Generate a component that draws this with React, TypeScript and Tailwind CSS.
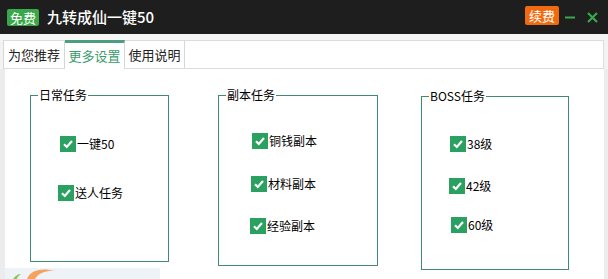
const cjk = { fontFamily: '"Microsoft YaHei", "Noto Sans CJK SC", sans-serif' };

function Check({ label, ml, mt }: { label: string; ml: string; mt: string }) {
    return (
        <div className={`flex items-center h-4 ${ml} ${mt}`}>
            <span className="w-4 h-4 bg-[#2aa160] flex items-center justify-center shrink-0">
                <svg width="12" height="12" viewBox="0 0 12 12">
                    <path d="M2 6.2 L4.8 9 L10 3" stroke="#fff" strokeWidth="2.2" fill="none" />
                </svg>
            </span>
            <span className="ml-px text-[12px] leading-4 text-black">{label}</span>
        </div>
    )
}

export default function App() {
    return (
        <div className="w-[608px] h-[279px] overflow-hidden bg-[#f3f3f3]" style={cjk}>
            {/* title bar */}
            <div className="h-[34px] bg-[#1e1e1e] flex items-center pl-[7px] pr-[10px]">
                <span className="bg-[#3aa74b] text-white text-[13px] leading-[17px] h-[17px] px-[3px] rounded-[2px]">免费</span>
                <span className="ml-[8px] text-white text-[15px] font-medium">九转成仙一键50</span>
                <span className="ml-auto bg-[#f06b10] text-white text-[13px] leading-[19px] h-[19px] px-[4px] rounded-[2px] -mt-[3px]">续费</span>
                <svg className="ml-[6px]" width="10" height="10" viewBox="0 0 10 10">
                    <path d="M0 5.5 H10" stroke="#3aa74b" strokeWidth="2" />
                </svg>
                <svg className="ml-[12px]" width="11" height="11" viewBox="0 0 11 11">
                    <path d="M1 1 L10 10 M10 1 L1 10" stroke="#3aa74b" strokeWidth="2.2" />
                </svg>
            </div>
            {/* tabs */}
            <div className="h-[6px] bg-[#f6f6f6]" />
            <div className="flex h-[29px] ml-[3px] mr-[4px] bg-white border-t border-b border-r border-[#dcdcdc]">
                <div className="w-[62px] border-l border-r border-[#d6d6d6] flex items-center justify-center text-[13px] text-[#222]">为您推荐</div>
                <div className="w-[60px] -mb-px bg-white border-r border-[#d6d6d6] border-t-[3px] border-t-[#4c9e7e] -mt-px flex items-center justify-center text-[13px] text-[#3a9c6b]">更多设置</div>
                <div className="w-[60px] border-r border-[#d6d6d6] flex items-center justify-center text-[13px] text-[#222]">使用说明</div>
            </div>
            {/* content */}
            <div className="relative flex h-[210px] bg-white border-l-[5px] border-r-[4px] border-[#ececec] pl-[25px] pt-[19px]">
                <fieldset className="w-[139px] h-[174px] border border-[#3f8c70] shrink-0">
                    <legend className="ml-[7px] px-px text-[12px] leading-[14px] text-black">日常任务</legend>
                    <Check label="一键50" ml="ml-[29px]" mt="mt-[34px]" />
                    <Check label="送人任务" ml="ml-[27px]" mt="mt-[33px]" />
                </fieldset>
                <fieldset className="ml-[49px] w-[160px] h-[178px] border border-[#3f8c70] shrink-0">
                    <legend className="ml-[7px] px-px text-[12px] leading-[14px] text-black">副本任务</legend>
                    <Check label="铜钱副本" ml="ml-[33px]" mt="mt-[31px]" />
                    <Check label="材料副本" ml="ml-[32px]" mt="mt-[27px]" />
                    <Check label="经验副本" ml="ml-[31px]" mt="mt-[26px]" />
                </fieldset>
                <fieldset className="ml-[43px] mt-px w-[148px] h-[181px] border border-[#3f8c70] shrink-0">
                    <legend className="ml-[7px] px-px text-[12px] leading-[14px] text-black">BOSS任务</legend>
                    <Check label="38级" ml="ml-[28px]" mt="mt-[33px]" />
                    <Check label="42级" ml="ml-[27px]" mt="mt-[26px]" />
                    <Check label="60级" ml="ml-[29px]" mt="mt-[23px]" />
                </fieldset>
                {/* peeking banner at bottom left */}
                <div className="absolute left-0 bottom-0 w-[155px] h-[11px] bg-[#eef3f7] overflow-hidden">
                    <svg width="60" height="11" viewBox="0 0 60 11">
                        <path d="M22 11 C25 3 35 -1 50 3 C40 2 33 6 30 11 Z" fill="#f4a25c" />
                        <path d="M8 11 C10 8 13 6 16 6 C13 8 12 10 12 11 Z" fill="#8cc35a" />
                    </svg>
                </div>
            </div>
        </div>
    )
}
